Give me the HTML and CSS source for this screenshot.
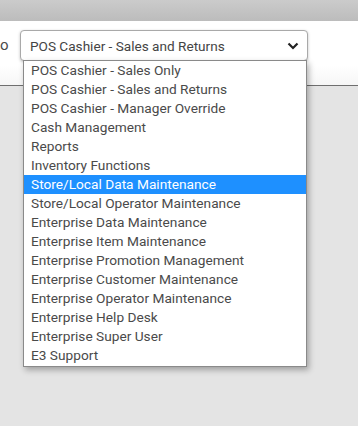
FILE: index.html
```html
<!DOCTYPE html>
<html lang="en">

<head>
    <meta charset="UTF-8">
    <meta name="viewport" content="width=device-width, initial-scale=1.0">
    <title>Role Selection</title>
    <link rel="stylesheet" href="styles.css">
</head>

<body>

    <div class="top-bar"></div>

    <div class="toolbar">
        <span class="field-label">o</span>
        <div class="role-select">
            <span class="role-value">POS Cashier - Sales and Returns</span>
            <svg class="chevron" width="12" height="8" viewBox="0 0 12 8">
                <path d="M1.5 1.5 L6 6 L10.5 1.5" fill="none" stroke="#222" stroke-width="2.2" />
            </svg>
        </div>
    </div>

    <ul class="role-list">
        <li>POS Cashier - Sales Only</li>
        <li>POS Cashier - Sales and Returns</li>
        <li>POS Cashier - Manager Override</li>
        <li>Cash Management</li>
        <li>Reports</li>
        <li>Inventory Functions</li>
        <li class="selected">Store/Local Data Maintenance</li>
        <li>Store/Local Operator Maintenance</li>
        <li>Enterprise Data Maintenance</li>
        <li>Enterprise Item Maintenance</li>
        <li>Enterprise Promotion Management</li>
        <li>Enterprise Customer Maintenance</li>
        <li>Enterprise Operator Maintenance</li>
        <li>Enterprise Help Desk</li>
        <li>Enterprise Super User</li>
        <li>E3 Support</li>
    </ul>

</body>

</html>
```

FILE: styles.css
```css
body {
    margin: 0;
    font-family: Roboto, 'Liberation Sans', sans-serif;
    background-color: #e4e4e4;
    position: relative;
    height: 426px;
    overflow: hidden;
}

.top-bar {
    height: 21px;
    background-image: linear-gradient(to bottom, #cbcbcb, #bcbcbc);
}

.toolbar {
    height: 65px;
    box-sizing: border-box;
    background-image: linear-gradient(to bottom, #ffffff 70%, #f6f6f6);
    border-bottom: 1px solid #6f6f6f;
    display: flex;
    align-items: flex-start;
    padding-top: 9px;
}

.field-label {
    width: 20px;
    margin-top: 6px;
    font-size: 15px;
    color: #4a4a4a;
}

.role-select {
    width: 288px;
    height: 31px;
    box-sizing: border-box;
    border: 1px solid #a9a9a9;
    border-radius: 4px;
    box-shadow: 0 1px 3px rgba(0, 0, 0, 0.25);
    background-color: #fff;
    display: flex;
    align-items: center;
    justify-content: space-between;
    padding: 0 8px 0 9px;
}

.role-value {
    font-size: 13.6px;
    color: #444;
}

.chevron {
    display: block;
}

.role-list {
    position: absolute;
    top: 60px;
    left: 23px;
    width: 284px;
    margin: 0;
    padding: 0 0 1px 0;
    list-style: none;
    background-color: #fff;
    border: 1px solid #8a8a8a;
    box-sizing: border-box;
    box-shadow: 2px 3px 6px rgba(0, 0, 0, 0.3);
}

.role-list li {
    height: 19px;
    line-height: 19px;
    padding-left: 7px;
    font-size: 13.7px;
    color: #4a4a4a;
    white-space: nowrap;
}

.role-list li.selected {
    background-color: #1e90ff;
    color: #fff;
}
```
